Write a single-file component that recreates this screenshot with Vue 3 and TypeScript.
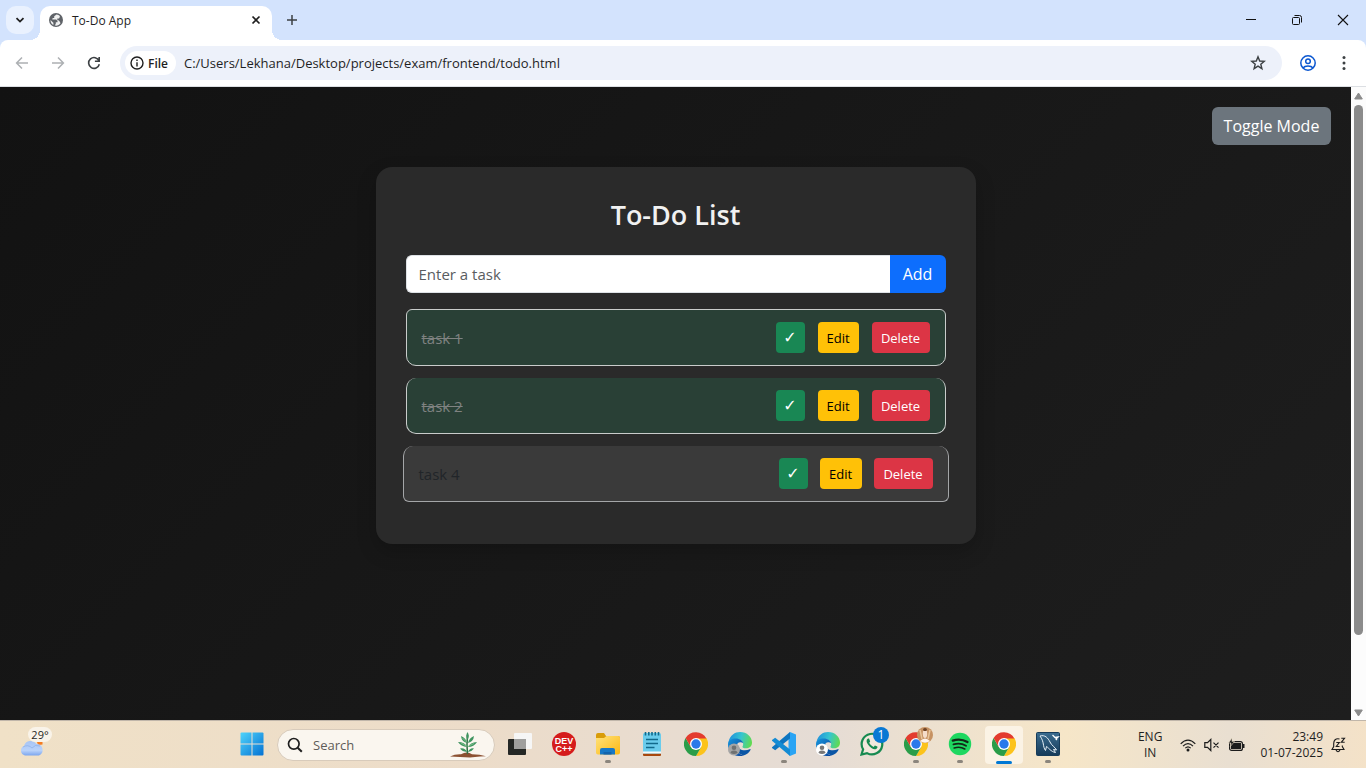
<script setup lang="ts">
import { ref } from 'vue'

interface Task {
  id: number
  title: string
  done: boolean
  active: boolean
}

interface TaskbarApp {
  id: string
  label: string
  running?: boolean
  current?: boolean
}

const url = ref('C:/Users/Lekhana/Desktop/projects/exam/frontend/todo.html')
const draft = ref('')
const search = ref('')

const tasks = ref<Task[]>([
  { id: 1, title: 'task 1', done: true, active: false },
  { id: 2, title: 'task 2', done: true, active: false },
  { id: 4, title: 'task 4', done: false, active: true },
])

const apps: TaskbarApp[] = [
  { id: 'taskview', label: 'Task view' },
  { id: 'devcpp', label: 'Dev-C++' },
  { id: 'explorer', label: 'File Explorer', running: true },
  { id: 'notepad', label: 'Notepad' },
  { id: 'chrome', label: 'Chrome' },
  { id: 'edge', label: 'Edge profile 1' },
  { id: 'vscode', label: 'Visual Studio Code', running: true },
  { id: 'edge2', label: 'Edge profile 2' },
  { id: 'whatsapp', label: 'WhatsApp' },
  { id: 'chrome2', label: 'Chrome profile', running: true },
  { id: 'spotify', label: 'Spotify', running: true },
  { id: 'chrome3', label: 'Chrome', current: true },
  { id: 'workbench', label: 'MySQL Workbench', running: true },
]

function addTask(): void {
  const title = draft.value.trim()
  if (!title) return
  tasks.value.push({ id: Date.now(), title, done: false, active: false })
  draft.value = ''
}

function editTask(task: Task): void {
  draft.value = task.title
  removeTask(task)
}

function removeTask(task: Task): void {
  tasks.value = tasks.value.filter((t) => t.id !== task.id)
}
</script>

<template>
  <div class="desktop">
    <svg class="defs" width="0" height="0" aria-hidden="true">
      <defs>
        <linearGradient id="win" x1="0" y1="0" x2="1" y2="1"><stop offset="0" stop-color="#4fd4fb" /><stop offset="1" stop-color="#0471d3" /></linearGradient>
        <linearGradient id="folder" x1="0" y1="0" x2="1" y2="1"><stop offset="0" stop-color="#ffe27a" /><stop offset="1" stop-color="#fdb813" /></linearGradient>
        <linearGradient id="edgeTop" x1="0" y1="0.4" x2="1" y2="0.6"><stop offset="0" stop-color="#2192dc" /><stop offset="0.5" stop-color="#36c5cf" /><stop offset="1" stop-color="#62db4c" /></linearGradient>
        <linearGradient id="edgeLow" x1="0" y1="0" x2="1" y2="1"><stop offset="0" stop-color="#1795dc" /><stop offset="1" stop-color="#0b449c" /></linearGradient>
        <linearGradient id="cloud" x1="0" y1="0" x2="0" y2="1"><stop offset="0" stop-color="#a7c4f5" /><stop offset="0.65" stop-color="#b9d2fa" /><stop offset="1" stop-color="#7ba6ee" /></linearGradient>
        <linearGradient id="sql" x1="0" y1="0" x2="0" y2="1"><stop offset="0" stop-color="#3b6d90" /><stop offset="1" stop-color="#153a59" /></linearGradient>
      </defs>
      <symbol id="chrome" viewBox="0 0 24 24">
        <path d="M12 6 H22.4 A12 12 0 0 1 12 24 L17.2 15Z" fill="#fcc31c" />
        <path d="M1.6 6 L6.8 15 L12 17.4 L17.2 15 L12 24 A12 12 0 0 1 1.6 6Z" fill="#2a9d49" />
        <path d="M1.6 6 A12 12 0 0 1 22.4 6.5 H12 L6.8 15Z" fill="#e33b2e" />
        <circle cx="12" cy="12" r="6" fill="#fff" /><circle cx="12" cy="12" r="4.7" fill="#2a79ea" />
      </symbol>
      <symbol id="edge" viewBox="0 0 24 24">
        <path d="M.5 10 C2 3 7 0 12 0 C19 0 24 5 24 10.5 C24 15 20.5 16.5 17.5 16.3 C14.5 16.2 14 15 15 13.5 C16 10 13 7 9 7 C4 7 1 10 .5 14Z" fill="url(#edgeTop)" />
        <path d="M0 13 C0 8 4 6.5 8 6.6 C11.5 6.7 14.5 8.5 15.2 11 C11 8.8 7.6 12 8.2 16 C8.8 20 12 22.4 15.5 23.4 C7 26 0 20 0 13Z" fill="url(#edgeLow)" />
        <path d="M9.2 12 C7 16 9 21.5 15.5 23.4 C19 22.5 21.5 20 22.6 17.7 C22.7 17.2 22.2 17 21.8 17.2 C16 20 9.5 17.5 9.2 12Z" fill="#0a55a5" />
      </symbol>
    </svg>

    <header class="tabstrip">
      <button class="tab-search" aria-label="Search tabs">
        <svg width="10" height="8" viewBox="0 0 10 8"><path d="M1.5 2.2 L5 5.6 L8.5 2.2" fill="none" stroke="#1f1f1f" stroke-width="1.8" /></svg>
      </button>
      <div class="tab">
        <svg width="14" height="14" viewBox="0 0 14 14">
          <circle cx="7" cy="7" r="7" fill="#5f6368" />
          <path d="M7.5 1.4 L5.2 3.2 V5 H3.7 L3.2 6.5 H7.2 L8.5 8 V9.2 H6.8 V10.8 L5.8 12.5 C8 13 10.2 12.2 11.5 10.3 L10.7 8.5 L9.4 7.2 H8.3 V5.6 H10 L10.8 4 V3 C10 2 9 1.5 7.5 1.4Z M1.5 7 C1.5 9.6 2.8 11.4 4.4 12 L4.4 9.8 L3.5 8.9Z" fill="#fff" opacity=".9" />
        </svg>
        <span class="tab-title">To-Do App</span>
        <button class="plain" aria-label="Close tab">
          <svg width="10" height="10" viewBox="0 0 10 10"><path d="M1.5 1.5 L8.5 8.5 M8.5 1.5 L1.5 8.5" stroke="#1f1f1f" stroke-width="1.7" /></svg>
        </button>
      </div>
      <button class="plain new-tab" aria-label="New tab">
        <svg width="12" height="12" viewBox="0 0 12 12"><path d="M6 1 V11 M1 6 H11" stroke="#3c4043" stroke-width="1.5" /></svg>
      </button>
      <div class="window-buttons">
        <button class="plain" aria-label="Minimize"><svg width="12" height="12" viewBox="0 0 12 12"><path d="M1 5.5 H11" stroke="#111" /></svg></button>
        <button class="plain" aria-label="Restore"><svg width="12" height="12" viewBox="0 0 12 12"><rect x="1.5" y="3.5" width="7" height="7" rx="1" fill="none" stroke="#111" /><path d="M3.5 1.5 H8.5 Q10.5 1.5 10.5 3.5 V8.5" fill="none" stroke="#111" /></svg></button>
        <button class="plain" aria-label="Close"><svg width="12" height="12" viewBox="0 0 12 12"><path d="M1 1 L11 11 M11 1 L1 11" stroke="#111" stroke-width="1.1" /></svg></button>
      </div>
    </header>

    <nav class="toolbar" aria-label="Browser toolbar">
      <div class="nav-buttons">
        <button class="plain" aria-label="Back"><svg width="14" height="14" viewBox="0 0 14 14"><path d="M7 1.5 L1.6 7 L7 12.5 M1.6 7 H13" fill="none" stroke="#adb0b3" stroke-width="1.5" /></svg></button>
        <button class="plain" aria-label="Forward"><svg width="14" height="14" viewBox="0 0 14 14"><path d="M7 1.5 L12.4 7 L7 12.5 M12.4 7 H1" fill="none" stroke="#adb0b3" stroke-width="1.5" /></svg></button>
        <button class="plain" aria-label="Reload"><svg width="14" height="14" viewBox="0 0 14 14"><path d="M12 4.8 A5.4 5.4 0 1 0 12.3 8.2 M12.2 1 V5.3 H7.9" fill="none" stroke="#3c4043" stroke-width="1.6" /></svg></button>
      </div>
      <div class="omnibox">
        <button class="file-chip">
          <svg width="14" height="14" viewBox="0 0 14 14"><circle cx="7" cy="7" r="6" fill="none" stroke="#1f1f1f" stroke-width="1.4" /><path d="M7 6.2 V10.4 M7 3.5 V5" stroke="#1f1f1f" stroke-width="1.4" /></svg>
          File
        </button>
        <input v-model="url" class="url" type="text" aria-label="Address" />
        <button class="plain" aria-label="Bookmark this tab">
          <svg width="16" height="16" viewBox="0 0 16 16"><path d="M8 1.8 L9.7 6 L14.3 6.3 L10.8 9.2 L11.9 13.7 L8 11.2 L4.1 13.7 L5.2 9.2 L1.7 6.3 L6.3 6Z" fill="none" stroke="#3c4043" stroke-width="1.4" /></svg>
        </button>
      </div>
      <button class="plain profile" aria-label="Profile">
        <svg width="16" height="16" viewBox="0 0 16 16"><g fill="none" stroke="#0b57d0" stroke-width="1.5"><circle cx="8" cy="8" r="7.2" /><circle cx="8" cy="6.2" r="2.3" /><path d="M3 13 C5 10.2 11 10.2 13 13" /></g></svg>
      </button>
      <button class="plain" aria-label="Menu">
        <svg width="16" height="16" viewBox="0 0 16 16" fill="#3c4043"><circle cx="8" cy="2.6" r="1.5" /><circle cx="8" cy="8" r="1.5" /><circle cx="8" cy="13.4" r="1.5" /></svg>
      </button>
    </nav>

    <div class="viewport">
      <main class="page">
        <button class="toggle">Toggle Mode</button>
        <section class="card">
          <h1>To-Do List</h1>
          <form class="entry" @submit.prevent="addTask">
            <input v-model="draft" type="text" placeholder="Enter a task" aria-label="Enter a task" />
            <button type="submit">Add</button>
          </form>
          <ul>
            <li v-for="task in tasks" :key="task.id" :class="{ done: task.done, active: task.active }">
              <span class="task-title">{{ task.title }}</span>
              <button class="check" :aria-label="'Complete ' + task.title" @click="task.done = !task.done">✓</button>
              <button class="edit" @click="editTask(task)">Edit</button>
              <button class="delete" @click="removeTask(task)">Delete</button>
            </li>
          </ul>
        </section>
      </main>
      <div class="scrollbar" aria-hidden="true">
        <svg width="9" height="8" viewBox="0 0 9 8"><path d="M4.5 1 L8.3 7 H.7Z" fill="#8b8b8b" stroke="#8b8b8b" stroke-linejoin="round" /></svg>
        <div class="track"><div class="thumb"></div></div>
        <svg width="9" height="8" viewBox="0 0 9 8"><path d="M4.5 7 L8.3 1 H.7Z" fill="#8b8b8b" stroke="#8b8b8b" stroke-linejoin="round" /></svg>
      </div>
    </div>

    <footer class="taskbar">
      <div class="weather">
        <button class="plain weather-button" aria-label="Weather">
          <svg width="24" height="18" viewBox="0 0 24 18"><path d="M17 3 H22.500 V5.500 L18 6Z" fill="#f47b20" /><path d="M5 16.500 A5 5 0 0 1 4 7 A7 7 0 0 1 16.500 5 A6 6 0 0 1 19 16.500Z" fill="url(#cloud)" /><path d="M3 8 Q8 5 12 9 Q15 5 20 7" fill="none" stroke="#86a8e2" stroke-width="1" opacity=".6" /></svg>
          <span class="temperature">29°</span>
        </button>
      </div>
      <button class="app" aria-label="Start">
        <svg width="24" height="24" viewBox="0 0 24 24"><rect x=".5" y=".5" width="23" height="23" rx="1" fill="url(#win)" /><path d="M12 0 V24 M0 12 H24" stroke="#eadfd2" /></svg>
      </button>
      <label class="search">
        <svg width="16" height="16" viewBox="0 0 16 16"><circle cx="6.8" cy="6.8" r="5.3" fill="none" stroke="#1f1f1f" stroke-width="1.7" /><path d="M10.7 10.7 L14.8 14.8" stroke="#1f1f1f" stroke-width="2" /></svg>
        <input v-model="search" type="text" placeholder="Search" aria-label="Search" />
        <svg width="36" height="26" viewBox="0 0 36 26">
          <path d="M0 24.5 Q5 22 11 22.3 Q17 18.8 22 22.2 Q30 22.2 36 24.2 L30 24.600 L20 25.500 L10 25Z" fill="#8c5132" />
          <path d="M17.5 22 Q16.5 13 17.5 3" fill="none" stroke="#2f7044" stroke-width="1.500" />
          <g fill="#3f9460"><path d="M17.5 8 Q15 4 17.5 0 Q20 4 17.5 8Z" /><path d="M17 11 Q11.500 9.500 11 4 Q16 6 17 11Z" /><path d="M18 11 Q19 6 24 4 Q23.500 9.500 18 11Z" /><path d="M17 15 Q11 14.500 8 10 Q15 10 17 15Z" /><path d="M18 15 Q20 10.500 27 10 Q24 15 18 15Z" /><path d="M17 20 Q12 19.500 10 16.500 Q15 15.500 17 20Z" /><path d="M18 20 Q20 15.500 24 16.500 Q22 19.500 18 20Z" /></g>
          <path d="M16.500 10 L12.500 6 M18.500 14 L24 11.500 M16.500 14 L11 11" stroke="#94d29b" stroke-width=".700" />
        </svg>
      </label>
      <button v-for="app in apps" :key="app.id" class="app" :class="{ running: app.running, current: app.current }" :aria-label="app.label">
        <svg v-if="app.id === 'taskview'" width="24" height="24" viewBox="0 0 24 24"><rect x="0" y="7" width="18" height="16" rx="1" fill="#242725" /><rect x="6" y="1" width="18" height="16" rx="1" fill="#f6f6f6" /><rect x="6" y="7" width="12" height="10" fill="#9f9f9e" /></svg>
        <svg v-else-if="app.id === 'devcpp'" width="24" height="24" viewBox="0 0 24 24"><circle cx="12" cy="12" r="12" fill="#d51c1c" /><text x="12" y="12" class="dev">DEV</text><text x="12" y="20" class="dev">C++</text></svg>
        <svg v-else-if="app.id === 'explorer'" width="24" height="24" viewBox="0 0 24 24"><path d="M0 3 Q0 1 2 1 H8 L10 4 H22 Q24 4 24 6 V10 H0Z" fill="#d99c09" /><path d="M0 6 H8 L10.5 4 H22 Q24 4 24 6 V20.500 Q24 22.500 22 22.500 H2 Q0 22.500 0 20.500Z" fill="url(#folder)" /><path d="M4 22.5 V18 Q4 16 6 16 H17 Q19 16 19 18 V22.5Z" fill="#1878c6" /><path d="M7.500 22.500 V20 H15.500 V22.500Z" fill="#1464ac" /></svg>
        <svg v-else-if="app.id === 'notepad'" width="24" height="24" viewBox="0 0 24 24"><rect x="3" y="21" width="18" height="3" rx="1" fill="#a8480e" /><rect x="3" y="1" width="18" height="20.500" rx="1.500" fill="#6accec" /><rect x="3" y="19.500" width="18" height="2" fill="#f4fbfd" /><path d="M5.500 0 V3.500 M8.800 0 V3.500 M12 0 V3.500 M15.300 0 V3.500 M18.500 0 V3.500 M6 7.500 H18 M6 11.500 H18 M6 15.500 H14.500" stroke="#116a8c" stroke-width="1.600" /></svg>
        <svg v-else-if="app.id.startsWith('chrome')" width="24" height="24"><use href="#chrome" /></svg>
        <svg v-else-if="app.id.startsWith('edge')" width="24" height="24" viewBox="0 0 24 24">
          <use href="#edge" />
          <circle cx="6" cy="17.500" r="6" :fill="app.id === 'edge' ? '#a5a5a5' : '#ffffff'" />
          <circle cx="6" cy="15.700" r="2.300" :fill="app.id === 'edge' ? '#6f7171' : '#777777'" />
          <path d="M2.500 21 Q2.500 18.500 6 18.500 Q9.500 18.500 9.500 21 Q6 23 2.500 21Z" :fill="app.id === 'edge' ? '#6f7171' : '#777777'" />
        </svg>
        <svg v-else-if="app.id === 'vscode'" width="24" height="24" viewBox="0 0 24 24"><path d="M18 0 L24 2.500 V21.500 L18 24 L16.500 22 V2Z" fill="#2aa4f4" /><path d="M18 0 V6.500 L3.200 18.300 L0 16 L0 15.300Z" fill="#0d75c0" /><path d="M18 24 V17.500 L3.200 5.700 L0 8 L0 8.700Z" fill="#138bd4" /></svg>
        <svg v-else-if="app.id === 'whatsapp'" width="24" height="24" viewBox="0 0 24 24"><path d="M1.500 22.500 L3.100 17.300 A10.300 10.300 0 1 1 7 21.100Z" fill="#f1e8dc" stroke="#168a50" stroke-width="2.200" /><path d="M8 6.500 C6 7.500 6.200 10 8 12.500 C10.500 16 14 18.200 16.200 17 C17.500 16.300 17.700 15 17.300 14.600 L14.900 13.400 L13.600 14.900 C11.500 14 10 12.500 9.200 10.800 L10.200 9.500 L9 6.600Z" fill="#168a50" /></svg>
        <svg v-else-if="app.id === 'spotify'" width="24" height="24" viewBox="0 0 24 24"><circle cx="12" cy="12" r="11.200" fill="#1ed760" /><path d="M4.800 8.600 Q12.500 6 19.500 10" fill="none" stroke="#122817" stroke-width="2.300" stroke-linecap="round" /><path d="M5.500 12.400 Q12.200 10.300 18 13.700" fill="none" stroke="#122817" stroke-width="1.900" stroke-linecap="round" /><path d="M6.200 16 Q12 14.200 16.800 17" fill="none" stroke="#122817" stroke-width="1.600" stroke-linecap="round" /></svg>
        <svg v-else width="24" height="24" viewBox="0 0 24 24"><rect x=".5" y=".5" width="23" height="23" rx="1" fill="url(#sql)" stroke="#173c5a" /><path d="M4 4 C9 2.500 12 6 14 10 C15.500 13.500 19 15 20.500 18 L17.500 17.500 L19.500 20.500 C14.500 19.500 13 16 10.500 14.500 L9.500 18.500 C6.500 14.500 8.500 10 4 4Z" fill="none" stroke="#e5eff6" stroke-width="1" /><path d="M16.500 3 L19 5.500 L22 5 L20 7 L21 8" fill="none" stroke="#fff" stroke-width="1.300" /></svg>
        <span v-if="app.id === 'whatsapp'" class="badge">1</span>
        <svg v-if="app.id === 'chrome2'" class="avatar" width="16" height="16" viewBox="0 0 16 16"><circle cx="8" cy="8" r="8" fill="#c69263" /><path d="M3 3 L5 12 M13 3 L11 12" stroke="#e8c59a" stroke-width="1.500" /><ellipse cx="8" cy="6.500" rx="2.200" ry="4.500" fill="#f5ddca" /><path d="M6 2 Q8 0 10 2 L9.500 4 H6.500Z" fill="#6e4325" /><path d="M3 14 Q8 9 13 14 Q8 17.500 3 14Z" fill="#fff4ea" /></svg>
      </button>
      <div class="tray">
        <button class="plain language"><span>ENG</span><span>IN</span></button>
        <button class="plain system" aria-label="Network, volume and battery">
          <svg width="16" height="14" viewBox="0 0 16 14"><g fill="none" stroke="#1c1c1c" stroke-width="1.200"><path d="M.7 5.800 Q8 -1.500 15.300 5.800 M3 8.100 Q8 3 13 8.100 M5.300 10.200 Q8 7.500 10.700 10.200" /></g><circle cx="8" cy="12" r="1.500" fill="#1c1c1c" /></svg>
          <svg width="16" height="14" viewBox="0 0 16 14"><path d="M.8 4.700 H3.500 L6.800 1.500 V12.500 L3.500 9.300 H.8Z M9.500 4.700 L14.500 9.700 M14.500 4.700 L9.500 9.700" fill="none" stroke="#1c1c1c" stroke-width="1.200" /></svg>
          <svg width="17" height="14" viewBox="0 0 17 14"><rect x="1.600" y="3.600" width="12.800" height="8.800" rx="2" fill="none" stroke="#1c1c1c" stroke-width="1.200" /><rect x="3" y="5" width="10" height="6" fill="#1c1c1c" /><path d="M15 6 H16.500 V10 H15Z" fill="#1c1c1c" /><path d="M4 0 L.5 5 H3 L2.300 8.500 L6.500 3.500 H4Z" fill="#1c1c1c" stroke="#efe1ca" stroke-width=".6" /></svg>
        </button>
        <button class="plain clock"><span>23:49</span><span>01-07-2025</span></button>
        <button class="plain" aria-label="Notifications">
          <svg width="15" height="16" viewBox="0 0 15 16" fill="none" stroke="#1c1c1c" stroke-width="1.100"><path d="M8.500 2 C4.500 1 2.700 3.500 2.700 6.500 V9.500 L1 12.500 H13 L11.300 9.500 V8.500 M5 13 Q7 16.500 9 13" /><path d="M5.300 5.500 H8.300 L5.300 9.500 H8.500 M10.300 1.300 H13.500 L10.300 5.300 H13.700" /></svg>
        </button>
      </div>
    </footer>
  </div>
</template>

<style>
body {
  margin: 0;
}
</style>

<style scoped>
* {
  box-sizing: border-box;
}

.desktop {
  display: flex;
  flex-direction: column;
  min-height: 100vh;
  background: #d3e3fd;
  color: #1f1f1f;
  font-family: 'Open Sans', 'Noto Sans', sans-serif;
}

.defs {
  position: absolute;
}

svg {
  flex: none;
  display: block;
}

button,
input {
  margin: 0;
  border: 0;
  font: inherit;
}

input {
  min-width: 0;
  outline: 0;
}

.plain {
  display: flex;
  align-items: center;
  justify-content: center;
  padding: 0;
  background: none;
  color: inherit;
}

.tabstrip {
  display: flex;
  align-items: center;
  height: 40px;
  padding-left: 6px;
}

.tab-search {
  display: flex;
  align-items: center;
  justify-content: center;
  width: 28px;
  height: 28px;
  padding: 0;
  border-radius: 10px;
  background: #e9f1fe;
}

.tab {
  position: relative;
  display: flex;
  align-items: center;
  align-self: flex-end;
  width: 232px;
  height: 34px;
  margin-left: 6px;
  padding: 0 11px 6px 9px;
  border-radius: 10px 10px 0 0;
  background: #fff;
  font-size: 12px;
}

.tab::before,
.tab::after {
  content: '';
  position: absolute;
  bottom: 0;
  width: 10px;
  height: 10px;
}

.tab::before {
  right: 100%;
  background: radial-gradient(circle at 0 0, transparent 10px, #fff 10px);
}

.tab::after {
  left: 100%;
  background: radial-gradient(circle at 100% 0, transparent 10px, #fff 10px);
}

.tab-title {
  flex: 1;
  margin-left: 9px;
}

.new-tab {
  margin-left: 14px;
}

.window-buttons {
  display: flex;
  margin-left: auto;
}

.window-buttons .plain {
  width: 46px;
  height: 40px;
}

.toolbar {
  display: flex;
  align-items: center;
  height: 47px;
  padding: 0 14px 0 15px;
  border-bottom: 1px solid #dcdfe3;
  border-radius: 8px 8px 0 0;
  background: #fff;
}

.nav-buttons {
  display: flex;
  gap: 22px;
}

.omnibox {
  display: flex;
  flex: 1;
  align-items: center;
  height: 34px;
  margin-left: 19px;
  padding: 0 16px 0 5px;
  border-radius: 17px;
  background: #edf1fa;
}

.file-chip {
  display: flex;
  align-items: center;
  gap: 4px;
  width: 51px;
  height: 24px;
  padding: 0 5px;
  border-radius: 12px;
  background: #fff;
  color: #1f1f1f;
  font-size: 12px;
  font-weight: 600;
}

.url {
  flex: 1;
  margin-left: 8px;
  padding: 0;
  background: none;
  color: #1f1f1f;
  font-size: 13px;
}

.profile {
  margin: 0 20px 0 18px;
}

.viewport {
  display: flex;
  flex: 1;
}

.page {
  display: flex;
  flex: 1;
  flex-direction: column;
  padding: 20px;
  background: linear-gradient(135deg, #121212, #1e1e1e);
}

.toggle {
  align-self: flex-end;
  width: 119px;
  height: 38px;
  padding: 0;
  border-radius: 6px;
  background: #6c757d;
  color: #fff;
  font-size: 16px;
}

.card {
  width: 100%;
  max-width: 600px;
  margin: 22px auto 0;
  padding: 30px;
  border-radius: 16px;
  background: #2a2a2a;
  box-shadow: 0 8px 20px rgba(0, 0, 0, 0.2);
}

h1 {
  margin: 0 0 22px;
  color: #f1f1f1;
  font-size: 27px;
  font-weight: 600;
  line-height: 36px;
  text-align: center;
}

.entry {
  display: flex;
  height: 38px;
  margin-bottom: 16px;
}

.entry input {
  flex: 1;
  padding: 0 12px;
  border: 1px solid #dee2e6;
  border-right: 0;
  border-radius: 6px 0 0 6px;
  background: #fff;
  font-size: 15px;
}

.entry input::placeholder {
  color: #595c5f;
  opacity: 1;
}

.entry button {
  width: 56px;
  padding: 0;
  border-radius: 0 6px 6px 0;
  background: #0d6efd;
  color: #fff;
  font-size: 16px;
}

ul {
  margin: 0;
  padding: 0;
  list-style: none;
}

li {
  display: flex;
  align-items: center;
  gap: 13px;
  margin-bottom: 12px;
  padding: 12px 15px;
  border: 1px solid #c9cccb;
  border-top-width: 0;
  border-radius: 10px;
  background: #2a2a2a;
  color: #212529;
  font-size: 15px;
}

li:first-child {
  border-top-width: 1px;
  border-top-left-radius: 6px;
  border-top-right-radius: 6px;
}

li:last-child {
  border-bottom-left-radius: 6px;
  border-bottom-right-radius: 6px;
}

li.done {
  background: #294036;
  color: #7f8281;
}

li.done .task-title {
  text-decoration: line-through;
}

li.active {
  gap: 12px;
  margin-right: -3px;
  margin-left: -3px;
  border-color: #a4a6a8;
  background: #3a3a3a;
}

.task-title {
  flex: 1;
}

li button {
  height: 31px;
  padding: 0;
  border-radius: 4px;
  color: #fff;
  font-size: 13px;
}

li .check {
  width: 29px;
  background: #198754;
  font-family: 'DejaVu Sans', sans-serif;
  font-size: 16px;
  font-weight: 700;
}

li .edit {
  width: 41px;
  background: #ffc107;
  color: #000;
}

li .delete {
  width: 58px;
  background: #dc3545;
}

li.active .edit {
  width: 42px;
}

li.active .delete {
  width: 59px;
}

.scrollbar {
  display: flex;
  flex-direction: column;
  align-items: center;
  width: 15px;
  padding: 5px 0 3px;
  background: #fcfcfc;
}

.track {
  flex: 1;
  width: 9px;
  margin: 5px 0;
}

.thumb {
  height: 88.5%;
  border-radius: 5px;
  background: #8b8b8b;
}

.taskbar {
  display: flex;
  align-items: center;
  height: 48px;
  padding-right: 20px;
  border-top: 1px solid #c0b6aa;
  background: linear-gradient(90deg, #f0e1c7, #ecdcc9 35%, #e5dcd5 60%, #f6e6c8 78%, #e9dfd1 90%, #f4e2c8);
}

.weather {
  flex: 0 0 230px;
}

.weather-button {
  position: relative;
  margin-left: 20px;
  padding-top: 6px;
}

.temperature {
  position: absolute;
  top: -6px;
  left: 8px;
  width: 24px;
  border-radius: 8px;
  background: #f9f3e9;
  font-size: 11px;
  line-height: 15px;
}

.app {
  position: relative;
  display: flex;
  flex: 0 0 44px;
  align-items: center;
  justify-content: center;
  height: 47px;
  padding: 0 0 2px;
  background: none;
}

.running::after,
.current::after {
  content: '';
  position: absolute;
  bottom: 5px;
  width: 6px;
  height: 3px;
  border-radius: 2px;
  background: #8b857d;
}

.current::after {
  bottom: 0;
  width: 16px;
  background: #0078d4;
}

.current {
  flex-basis: 38px;
  height: 38px;
  margin: 0 3px;
  border-radius: 4px;
  background: #fbf3e5;
}

.dev {
  fill: #fff;
  font-family: 'Liberation Sans', sans-serif;
  font-size: 9px;
  font-weight: 700;
  text-anchor: middle;
}

.badge {
  position: absolute;
  top: 6px;
  right: 5px;
  width: 16px;
  border-radius: 8px;
  background: #0878d4;
  color: #fff;
  font-size: 12px;
  line-height: 16px;
}

.avatar {
  position: absolute;
  top: 6px;
  right: 5px;
}

.search {
  display: flex;
  align-items: center;
  width: 218px;
  height: 32px;
  margin: 0 3px;
  padding: 0 8px 0 9px;
  border: 1px solid #d8cbbb;
  border-radius: 16px;
  background: #faf6ef;
}

.search input {
  flex: 1;
  margin-left: 10px;
  padding: 0;
  background: none;
  font-size: 13px;
}

.search input::placeholder {
  color: #5e5c59;
  opacity: 1;
}

.tray {
  display: flex;
  align-items: center;
  margin-left: auto;
  font-size: 12px;
  line-height: 16px;
}

.language {
  flex-direction: column;
  margin-right: 18px;
}

.system {
  gap: 8px;
}

.clock {
  flex-direction: column;
  align-items: flex-end;
  margin: 0 8px 0 15px;
}
</style>
